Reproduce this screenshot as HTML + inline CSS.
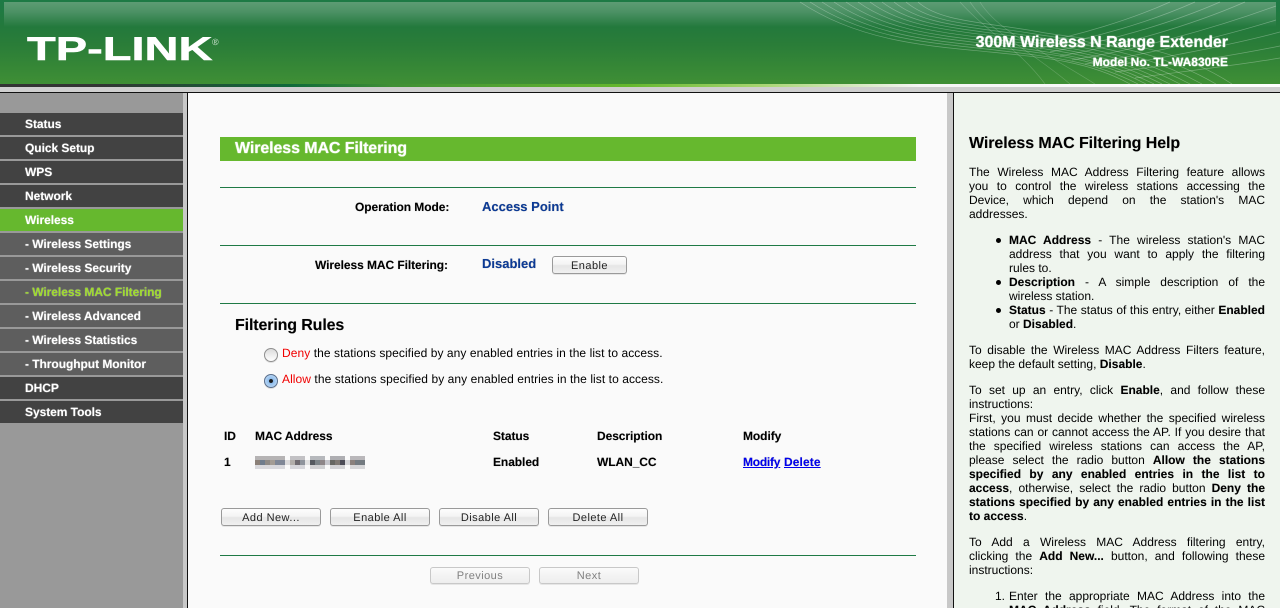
<!DOCTYPE html>
<html><head><meta charset="utf-8"><title>TP-LINK</title>
<style>
html,body{margin:0;padding:0;height:608px;overflow:hidden}
#w{position:relative;width:1280px;height:608px;overflow:hidden;background:#fafafa;font-family:"Liberation Sans",Arial,sans-serif;font-size:12px;color:#000;text-rendering:geometricPrecision}
.a{position:absolute;white-space:nowrap}
.m{position:absolute;left:0;width:183px;height:22px;line-height:22px;background:#424242;color:#fff;font-weight:bold;font-size:12px;text-indent:25px;letter-spacing:-.05px;text-shadow:0 0 1px rgba(255,255,255,.6)}
.s{background:#5e5e5e}
.hr{position:absolute;left:220px;width:696px;height:1px;background:#1f7a45}
.b{position:absolute;box-sizing:border-box;width:100px;height:18px;border:1px solid #9a9a9a;border-radius:3px;background:linear-gradient(#fdfdfd,#f4f4f4 45%,#e6e6e6 55%,#f0f0f0);text-align:center;font-size:11px;line-height:18px;letter-spacing:.45px;color:#222;box-shadow:0 1px 0 rgba(0,0,0,.08)}
.d{border-color:#c8c8c8;color:#808080;background:linear-gradient(#fbfbfb,#f3f3f3 50%,#eeeeee);height:17px;line-height:16px}
.t{position:absolute;font-weight:bold;white-space:nowrap;line-height:14px;letter-spacing:-.07px;text-shadow:0 0 .6px rgba(0,0,0,.45)}
.l{position:absolute;left:969px;width:296px;height:14px;line-height:14px;text-align:justify;text-align-last:justify;white-space:nowrap}
.l b{text-shadow:0 0 .5px rgba(0,0,0,.4)}
.n{text-align-last:left}
.i{left:1009px;width:256px}
.r{position:absolute;box-sizing:border-box;left:264px;width:14px;height:14px;border-radius:50%;border:1px solid #8f8f8f;background:linear-gradient(#dcdcdc,#fff);box-shadow:0 1px 0 rgba(0,0,0,.1)}
.dot{position:absolute;left:996px;width:5px;height:5px;border-radius:50%;background:#000}
</style></head><body><div id="w">

<div style="position:absolute;left:0;top:0;width:1280px;height:84px;background:linear-gradient(#1d7a45 0,#1d7a45 2px,#23793c 27px,#2a7d38 45px,#3f8f35 84px)"></div>
<div style="position:absolute;left:4px;top:2px;width:1272px;height:25px;background:linear-gradient(#5d9c74,#4b9164 40%,#23793c)"></div>
<svg style="position:absolute;left:0;top:0" width="1280" height="84" fill="none" stroke="#fff" stroke-width=".7" stroke-opacity=".3">
<path d="M800 2C860 42 930 46 990 52S1090 62 1130 84"/>
<path d="M810 2C868 40 935 43 995 50S1095 62 1138 84"/>
<path d="M822 2C876 38 940 41 1000 48S1100 60 1146 84"/>
<path d="M834 2C884 36 945 38 1005 46S1105 60 1154 84"/>
<path d="M846 2C892 34 950 36 1010 44S1110 58 1162 84"/>
<path d="M858 2C900 32 955 33 1015 42S1115 56 1170 84"/>
<path d="M870 2C908 30 960 30 1020 40S1122 54 1180 84"/>
<path d="M882 2C916 28 965 28 1025 38S1130 52 1190 84"/>
<path d="M894 2C924 26 970 26 1030 36S1140 50 1202 84"/>
<path d="M906 2C932 24 975 24 1035 34S1150 46 1216 84"/>
<path d="M918 2C940 22 985 22 1040 32S1165 40 1232 84"/>
<path d="M960 2C985 30 1020 50 1045 84" stroke-opacity=".2"/>
<path d="M970 2C990 32 1030 50 1070 84" stroke-opacity=".2"/>
<path d="M980 2C998 32 1045 52 1095 84" stroke-opacity=".2"/>
<path d="M1030 45C1080 35 1130 20 1170 2"/>
<path d="M1040 48C1095 38 1150 22 1195 2"/>
<path d="M1050 52C1105 42 1170 24 1220 2"/>
<path d="M1060 56C1120 46 1190 26 1245 2"/>
<path d="M1072 60C1135 50 1210 30 1276 6"/>
<path d="M1085 64C1150 54 1225 36 1276 20"/>
<path d="M1100 68C1165 58 1235 44 1280 32"/>
<path d="M1115 72C1180 64 1240 54 1280 46"/>
<path d="M1135 78C1195 70 1245 64 1280 58"/>
</svg>
<div style="position:absolute;left:0;top:84px;width:1280px;height:3px;background:linear-gradient(90deg,#333 0,#333 95px,#0f6a3a 290px,#3f8f35 390px,#66b82e 630px,#a6d46f 757px,#f5f5f5 920px,#fff 1280px)"></div>
<div style="position:absolute;left:0;top:87px;width:1280px;height:5px;background:#cfcfcf"></div>
<div style="position:absolute;left:0;top:92px;width:1280px;height:1px;background:#111"></div>

<div class="a" style="left:27px;top:30px;font-size:33px;line-height:38px;font-weight:bold;color:#fff;transform:scaleX(1.425);transform-origin:0 0;-webkit-text-stroke:.5px #fff">TP-LINK</div>
<div class="a" style="left:212px;top:37px;font-size:9px;line-height:10px;color:#cfe3cf">®</div>
<div class="a" style="right:52px;top:34px;font-size:16px;line-height:18px;font-weight:bold;color:#fff;text-shadow:0 0 1px #fff">300M Wireless N Range Extender</div>
<div class="a" style="right:52px;top:55px;font-size:12px;line-height:14px;font-weight:bold;color:#fff;text-shadow:0 0 1px #fff">Model No. TL-WA830RE</div>

<div style="position:absolute;left:0;top:93px;width:183px;height:515px;background:#999"></div>
<div style="position:absolute;left:183px;top:93px;width:4px;height:515px;background:#c8c8c8"></div>
<div style="position:absolute;left:187px;top:93px;width:1px;height:515px;background:#111"></div>

<div class="m" style="top:113px">Status</div>
<div class="m" style="top:137px">Quick Setup</div>
<div class="m" style="top:161px">WPS</div>
<div class="m" style="top:185px">Network</div>
<div class="m" style="top:209px;background:#66b82e">Wireless</div>
<div class="m s" style="top:233px">- Wireless Settings</div>
<div class="m s" style="top:257px">- Wireless Security</div>
<div class="m s" style="top:281px;color:#9fdc2c">- Wireless MAC Filtering</div>
<div class="m s" style="top:305px">- Wireless Advanced</div>
<div class="m s" style="top:329px">- Wireless Statistics</div>
<div class="m s" style="top:353px">- Throughput Monitor</div>
<div class="m" style="top:377px">DHCP</div>
<div class="m" style="top:401px">System Tools</div>

<div style="position:absolute;left:947px;top:93px;width:6px;height:515px;background:#c8c8c8"></div>
<div style="position:absolute;left:953px;top:93px;width:1px;height:515px;background:#111"></div>
<div style="position:absolute;left:954px;top:93px;width:326px;height:515px;background:#eff5ee"></div>

<div style="position:absolute;left:220px;top:137px;width:696px;height:24px;background:#66b82e;color:#fff;font-weight:bold;font-size:16px;line-height:24px;text-indent:15px;letter-spacing:-.1px;text-shadow:0 0 1px #fff">Wireless MAC Filtering</div>
<div class="hr" style="top:187px"></div>
<div class="hr" style="top:245px"></div>
<div class="hr" style="top:303px"></div>
<div class="hr" style="top:555px"></div>

<div class="t" style="left:355px;top:200px">Operation Mode:</div>
<div class="t" style="left:482px;top:200px;font-size:13px;letter-spacing:0;color:#0b3a96">Access Point</div>
<div class="t" style="left:315px;top:258px">Wireless MAC Filtering:</div>
<div class="t" style="left:482px;top:257px;font-size:13px;letter-spacing:0;color:#0b3a96">Disabled</div>
<div class="b" style="left:552px;top:256px;width:75px">Enable</div>

<div class="t" style="left:235px;top:317px;font-size:16px;line-height:18px;letter-spacing:-.13px">Filtering Rules</div>
<div class="r" style="top:348px"></div>
<div class="a" style="left:282px;top:346px;line-height:14px;letter-spacing:.07px"><span style="color:#f00000">Deny</span> the stations specified by any enabled entries in the list to access.</div>
<div class="r" style="top:374px;background:radial-gradient(circle,#1a1a1a 0,#1a1a1a 1.7px,#8fbdec 2.3px,#cfe4f9 100%);border-color:#5a6f8c"></div>
<div class="a" style="left:282px;top:372px;line-height:14px;letter-spacing:.07px"><span style="color:#f00000">Allow</span> the stations specified by any enabled entries in the list to access.</div>

<div class="t" style="left:224px;top:429px">ID</div>
<div class="t" style="left:255px;top:429px">MAC Address</div>
<div class="t" style="left:493px;top:429px">Status</div>
<div class="t" style="left:597px;top:429px">Description</div>
<div class="t" style="left:743px;top:429px">Modify</div>
<div class="t" style="left:224px;top:455px">1</div>
<svg style="position:absolute;left:255px;top:456px" width="110" height="13" shape-rendering="crispEdges">
<rect x="0" y="0" width="30" height="4" fill="#b5b3b4"/><rect x="35" y="0" width="15" height="4" fill="#c2c1c4"/><rect x="55" y="0" width="15" height="4" fill="#b6b8bc"/><rect x="75" y="0" width="15" height="4" fill="#aeaeb2"/><rect x="95" y="0" width="15" height="4" fill="#b9b7ba"/>
<rect x="0" y="4" width="5" height="5" fill="#8b8078"/><rect x="5" y="4" width="5" height="5" fill="#6f7c8c"/><rect x="10" y="4" width="5" height="5" fill="#8e8a86"/><rect x="15" y="4" width="5" height="5" fill="#a39c94"/><rect x="20" y="4" width="10" height="5" fill="#7f8796"/>
<rect x="30" y="4" width="5" height="5" fill="#dcdbdc"/><rect x="35" y="4" width="5" height="5" fill="#b2aeaa"/><rect x="40" y="4" width="5" height="5" fill="#6f6b70"/><rect x="45" y="4" width="5" height="5" fill="#8f949c"/><rect x="50" y="4" width="5" height="5" fill="#e2e2e2"/>
<rect x="55" y="4" width="5" height="5" fill="#555a60"/><rect x="60" y="4" width="5" height="5" fill="#7c8488"/><rect x="65" y="4" width="5" height="5" fill="#8d8688"/><rect x="70" y="4" width="5" height="5" fill="#c5c5cb"/>
<rect x="75" y="4" width="5" height="5" fill="#676762"/><rect x="80" y="4" width="5" height="5" fill="#7e7872"/><rect x="85" y="4" width="5" height="5" fill="#4c4c56"/><rect x="90" y="4" width="5" height="5" fill="#d5d5d8"/>
<rect x="95" y="4" width="5" height="5" fill="#8a807c"/><rect x="100" y="4" width="10" height="5" fill="#737a80"/>
<rect x="0" y="9" width="30" height="4" fill="#d8d8dc"/><rect x="35" y="9" width="15" height="4" fill="#d6d6da"/><rect x="55" y="9" width="15" height="4" fill="#cfd0d2"/><rect x="75" y="9" width="15" height="4" fill="#d2d2d4"/><rect x="95" y="9" width="15" height="4" fill="#d6d6d8"/>
</svg>
<div class="t" style="left:493px;top:455px">Enabled</div>
<div class="t" style="left:597px;top:455px">WLAN_CC</div>
<div class="t" style="left:743px;top:455px;letter-spacing:-.25px;color:#0000ee;text-decoration:underline">Modify</div>
<div class="t" style="left:784px;top:455px;letter-spacing:.1px;color:#0000ee;text-decoration:underline">Delete</div>

<div class="b" style="left:221px;top:508px">Add New...</div>
<div class="b" style="left:330px;top:508px">Enable All</div>
<div class="b" style="left:439px;top:508px">Disable All</div>
<div class="b" style="left:548px;top:508px">Delete All</div>
<div class="b d" style="left:430px;top:567px">Previous</div>
<div class="b d" style="left:539px;top:567px">Next</div>

<div class="t" style="left:969px;top:135px;font-size:16px;line-height:18px;letter-spacing:-.08px">Wireless MAC Filtering Help</div>
<div class="l" style="top:165px">The Wireless MAC Address Filtering feature allows</div>
<div class="l" style="top:179px">you to control the wireless stations accessing the</div>
<div class="l" style="top:193px">Device, which depend on the station's MAC</div>
<div class="l n" style="top:207px">addresses.</div>

<div class="dot" style="top:238px"></div>
<div class="l i" style="top:233px"><b>MAC Address</b> - The wireless station's MAC</div>
<div class="l i" style="top:247px">address that you want to apply the filtering</div>
<div class="l i n" style="top:261px">rules to.</div>
<div class="dot" style="top:280px"></div>
<div class="l i" style="top:275px"><b>Description</b> - A simple description of the</div>
<div class="l i n" style="top:289px">wireless station.</div>
<div class="dot" style="top:308px"></div>
<div class="l i" style="top:303px"><b>Status</b> - The status of this entry, either <b>Enabled</b></div>
<div class="l i n" style="top:317px">or <b>Disabled</b>.</div>

<div class="l" style="top:343px">To disable the Wireless MAC Address Filters feature,</div>
<div class="l n" style="top:357px">keep the default setting, <b>Disable</b>.</div>

<div class="l" style="top:383px">To set up an entry, click <b>Enable</b>, and follow these</div>
<div class="l n" style="top:397px">instructions:</div>
<div class="l" style="top:411px">First, you must decide whether the specified wireless</div>
<div class="l" style="top:425px">stations can or cannot access the AP. If you desire that</div>
<div class="l" style="top:439px">the specified wireless stations can access the AP,</div>
<div class="l" style="top:453px">please select the radio button <b>Allow the stations</b></div>
<div class="l" style="top:467px"><b>specified by any enabled entries in the list to</b></div>
<div class="l" style="top:481px"><b>access</b>, otherwise, select the radio button <b>Deny the</b></div>
<div class="l" style="top:495px"><b>stations specified by any enabled entries in the list</b></div>
<div class="l n" style="top:509px"><b>to access</b>.</div>

<div class="l" style="top:535px">To Add a Wireless MAC Address filtering entry,</div>
<div class="l" style="top:549px">clicking the <b>Add New...</b> button, and following these</div>
<div class="l n" style="top:563px">instructions:</div>

<div class="a" style="left:995px;top:589px;line-height:14px">1.</div>
<div class="l i" style="top:589px">Enter the appropriate MAC Address into the</div>
<div class="l i" style="top:603px"><b>MAC Address</b> field. The format of the MAC</div>
</div></body></html>
